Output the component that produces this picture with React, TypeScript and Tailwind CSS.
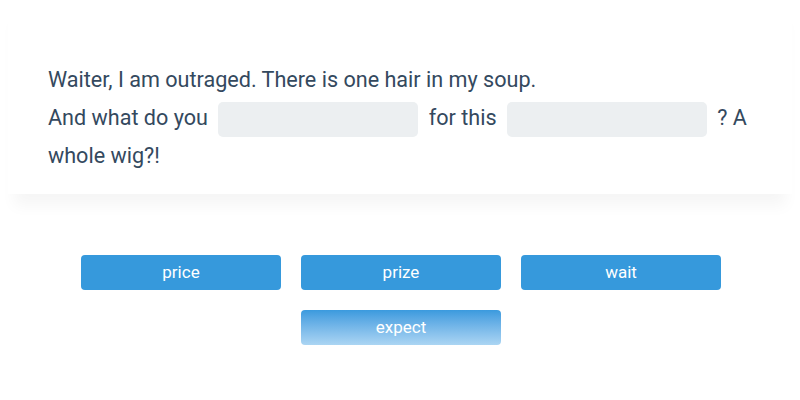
const words = ["price", "prize", "wait"];

function Blank() {
  return <span className="mx-[5px] inline-block h-[35px] w-[200px] rounded-[5px] bg-[#eceff1] align-middle" />;
}

function WordButton({ label, fading }: { label: string; fading?: boolean }) {
  return (
    <button
      className={
        "h-[35px] w-[200px] rounded-[4px] text-[17px] text-white " +
        (fading ? "bg-gradient-to-b from-[#3a9ade] to-[#abd5f3]" : "bg-[#3699dc]")
      }
    >
      {label}
    </button>
  );
}

export default function App() {
  return (
    <div className="h-[400px] w-[800px] bg-white font-['Roboto',sans-serif]">
      <div className="mx-2 bg-white px-10 pb-[19px] pt-[61px] shadow-[0_18px_14px_-6px_rgba(0,0,0,0.04)]">
        <p className="text-[21.6px] leading-[38px] text-[#34495e]">
          Waiter, I am outraged. There is one hair in my soup.
          <br />
          And what do you <Blank /> for this <Blank /> ? A whole wig?!
        </p>
      </div>
      <div className="mt-[61px] flex flex-col items-center gap-5 pl-[2px]">
        <div className="flex gap-5">
          {words.map((w) => (
            <WordButton key={w} label={w} />
          ))}
        </div>
        <WordButton label="expect" fading />
      </div>
    </div>
  );
}
